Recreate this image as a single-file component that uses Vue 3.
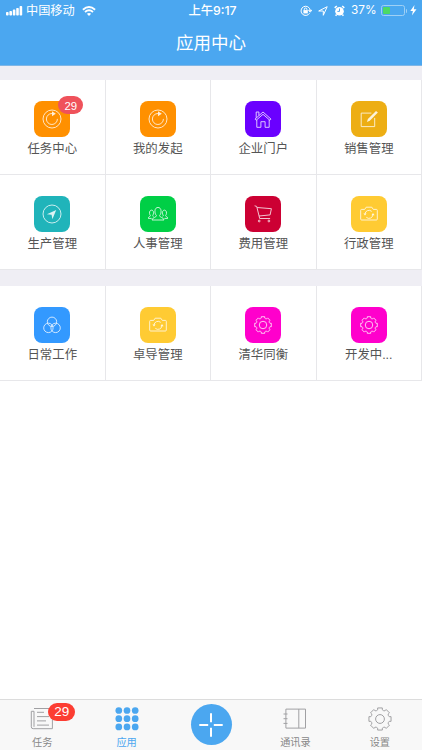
<template>
  <div class="page">
    <header class="header">
      <div class="status-bar">
        <div class="status-left">
          <svg class="signal" width="17" height="10" viewBox="0 0 17 10">
            <rect x="0" y="6" width="2.6" height="3.6" rx=".8" />
            <rect x="3.4" y="4.9" width="2.6" height="4.7" rx=".8" />
            <rect x="6.8" y="3.6" width="2.6" height="6" rx=".8" />
            <rect x="10.2" y="2" width="2.6" height="7.6" rx=".8" />
            <rect x="13.6" y="0" width="2.6" height="9.6" rx=".8" />
          </svg>
          <span class="carrier">中国移动</span>
          <svg class="wifi" width="14" height="10" viewBox="0 0 14 10">
            <path d="M.9 3.7Q7-1.7 13.1 3.7" />
            <path d="M3 6Q7 2.6 11 6" />
            <path class="dot" d="M4.9 7.7Q7 6.1 9.1 7.7L7 10z" />
          </svg>
        </div>
        <div class="status-time">上午9:17</div>
        <div class="status-right">
          <svg width="12" height="12" viewBox="0 0 12 12">
            <path class="line" d="M9.6 8.2A4.6 4.6 0 1 1 10.2 5.2M8.6 5.3h3.1L10.2 7.2z" />
            <rect x="3.4" y="5.1" width="4.4" height="3.3" />
            <path class="line" d="M4.3 5.4V4.3a1.3 1.3 0 0 1 2.6 0v1.1" />
          </svg>
          <svg width="10" height="10" viewBox="0 0 10 10">
            <path class="line" d="M.7 5L9.2.7 5.3 9.3V5z" />
          </svg>
          <svg class="alarm" width="11" height="12" viewBox="0 0 11 12">
            <circle cx="5.5" cy="6.2" r="4.3" />
            <path class="line thick" d="M.7 2.9L2.8 1M8.2 1l2.1 1.9M2.6 9.6l-1 1.2M8.4 9.6l1 1.2" />
            <path class="hand" d="M5.5 3.5v2.9H3.4" />
          </svg>
          <span class="percent">37%</span>
          <span class="battery"><span class="battery-level" :style="{ width: batteryLevel + '%' }"></span></span>
          <span class="battery-cap"></span>
          <svg class="bolt" width="7" height="11" viewBox="0 0 7 11">
            <path d="M4.5 0L.3 6h2.6L1.9 10.5 6.5 4.2H3.8z" />
          </svg>
        </div>
      </div>
      <h1 class="title">应用中心</h1>
    </header>

    <main class="content">
      <section v-for="(group, g) in groups" :key="g" class="app-grid">
        <div v-for="app in group" :key="app.name" class="app-cell">
          <div class="app-icon" :class="app.color">
            <svg v-if="app.icon === 'refresh'" viewBox="0 0 20 20">
              <circle cx="10" cy="10" r="9" />
              <path d="M15.4 9.9A5.5 5.5 0 1 1 10 4.5h1" />
              <path class="solid" d="M10 2.2L13.8 4.8 10 7.2z" />
            </svg>
            <svg v-else-if="app.icon === 'home'" viewBox="0 0 20 20">
              <path d="M2 10.1L10 3l8 7.1-1.1 1.2L10 5.3l-6.9 6z" />
              <path d="M3.8 10.7v7.6h4.1v-5.6h4.2v5.6h4.1v-7.6M3.2 8.8V3h2.7v3.4" />
            </svg>
            <svg v-else-if="app.icon === 'edit'" viewBox="0 0 20 20">
              <path d="M12.4 4.1H2.2v13.5h13.5V8.9" />
              <path class="solid" d="M7.9 13l1-2.9 8.1-8 1.9 1.4-8.1 8.2z" />
            </svg>
            <svg v-else-if="app.icon === 'compass'" viewBox="0 0 20 20">
              <circle cx="10" cy="10" r="9" />
              <path class="solid" d="M4.9 10.2L14.2 6l-3.8 9.2-.8-4.4z" />
            </svg>
            <svg v-else-if="app.icon === 'people'" viewBox="0 0 20 20">
              <path d="M8.4 11.5C6.9 9.8 6.9 8.4 7 6.6c.1-4.2 5.9-4.2 6 0 .1 1.8.1 3.2-1.4 4.9 0 2.4 4.1 1.5 4.4 4.5H4c.3-3 4.4-2.1 4.4-4.5z" />
              <path d="M5.4 12.6c-.7-.3-.7-.8-.6-1.2 3-5.6-3.6-7.4-3.3-2.1.1 1 .4 1.6.9 2.2 0 1.4-2.2 1-2.2 2.9h3.4M14.6 12.6c.7-.3.7-.8.6-1.2-3-5.6 3.6-7.4 3.3-2.1-.1 1-.4 1.6-.9 2.2 0 1.4 2.2 1 2.2 2.9h-3.4" />
            </svg>
            <svg v-else-if="app.icon === 'cart'" viewBox="0 0 20 20">
              <path d="M1.6 1.8l2.1.6 3 12.1h10.4M4.2 3.5l14.2 1.2-1.3 6.2L6 12" />
              <circle cx="6.2" cy="17" r=".9" />
              <circle cx="15.9" cy="17" r=".9" />
            </svg>
            <svg v-else-if="app.icon === 'camera'" viewBox="0 0 20 20">
              <path d="M2.6 5.4h3.1l1.5-2.2h5.6l1.5 2.2h3.1q.9 0 .9.9v8.8q0 .9-.9.9H2.6q-.9 0-.9-.9V6.3q0-.9.9-.9z" />
              <path d="M6 10a4 4 0 0 1 6.7-2.6M14 10.7a4 4 0 0 1-6.7 2.6" />
              <path class="solid" d="M4.4 9.4h3.2L6 11.6zM12.4 11.3h3.2L14 9.1z" />
            </svg>
            <svg v-else-if="app.icon === 'rings'" viewBox="0 0 20 20">
              <circle cx="10" cy="6.8" r="4.7" />
              <circle cx="6.4" cy="12.9" r="4.7" />
              <circle cx="13.6" cy="12.9" r="4.7" />
            </svg>
            <svg v-else class="gear" viewBox="0 0 24 24">
              <path :d="gearPath" />
              <circle cx="12" cy="12" r="5" />
            </svg>
            <span v-if="app.badge" class="app-badge">{{ app.badge }}</span>
          </div>
          <span class="app-name">{{ app.name }}</span>
        </div>
      </section>
    </main>

    <nav class="tab-bar">
      <div class="tab">
        <div class="tab-icon">
          <svg width="24" height="24" viewBox="0 0 24 24">
            <path d="M4 1.5h18.4v20.2H3.2q-1.9 0-1.9-1.9V4.3H4v15.5M7 5.3h7M7 9.6h12M7 13.9h9M7 18.1h12" />
          </svg>
          <span class="tab-badge">29</span>
        </div>
        <span>任务</span>
      </div>
      <div class="tab active">
        <div class="tab-icon">
          <svg width="24" height="24" viewBox="0 0 24 24">
            <template v-for="row in 3" :key="row">
              <circle v-for="col in 3" :key="col" class="grid-dot" :cx="col * 8.2 - 4.4" :cy="row * 8.2 - 4.7" r="3.35" />
            </template>
          </svg>
        </div>
        <span>应用</span>
      </div>
      <div class="tab">
        <div class="add-button">
          <svg width="28" height="28" viewBox="0 0 28 28">
            <path d="M14 2.3v8.9M14 16.8v8.9M2.3 14h8.9M16.8 14h8.9" />
          </svg>
        </div>
      </div>
      <div class="tab">
        <div class="tab-icon">
          <svg width="24" height="24" viewBox="0 0 24 24">
            <path d="M2.9 2.1h19.6v19H2.9zM15.8 2.1v19M.5 7h4M.5 11.7h4M.5 16.4h4" />
          </svg>
        </div>
        <span>通讯录</span>
      </div>
      <div class="tab">
        <div class="tab-icon">
          <svg width="24" height="24" viewBox="0 0 24 24">
            <path :d="gearPath" />
            <circle cx="12" cy="12" r="4.4" />
          </svg>
        </div>
        <span>设置</span>
      </div>
    </nav>
  </div>
</template>

<script setup>
const batteryLevel = 37

const groups = [
  [
    { name: '任务中心', icon: 'refresh', color: 'orange', badge: 29 },
    { name: '我的发起', icon: 'refresh', color: 'orange' },
    { name: '企业门户', icon: 'home', color: 'purple' },
    { name: '销售管理', icon: 'edit', color: 'amber' },
    { name: '生产管理', icon: 'compass', color: 'teal' },
    { name: '人事管理', icon: 'people', color: 'green' },
    { name: '费用管理', icon: 'cart', color: 'red' },
    { name: '行政管理', icon: 'camera', color: 'yellow' }
  ],
  [
    { name: '日常工作', icon: 'rings', color: 'blue' },
    { name: '卓导管理', icon: 'camera', color: 'yellow' },
    { name: '清华同衡', icon: 'gear', color: 'pink' },
    { name: '开发中...', icon: 'gear', color: 'pink' }
  ]
]

// Eight teeth around a 24x24 box, the gaps are rounded inwards
const point = (radius, degrees) => {
  const angle = (degrees * Math.PI) / 180
  return `${(12 + radius * Math.cos(angle)).toFixed(2)} ${(12 + radius * Math.sin(angle)).toFixed(2)}`
}

const gearPath =
  Array.from({ length: 8 }, (_, i) => {
    const a = i * 45
    return `${i ? 'L' : 'M'}${point(9.5, a - 14)}L${point(11.3, a - 12)}L${point(11.3, a + 12)}L${point(9.5, a + 14)}Q${point(8.7, a + 22.5)} ${point(9.5, a + 31)}`
  }).join('') + 'Z'
</script>

<style>
body {
  margin: 0;
  background: #fff;
}
</style>

<style scoped>
.page {
  height: 750px;
  display: flex;
  flex-direction: column;
  overflow: hidden;
  background: #fff;
  font-family: 'Liberation Sans', 'Noto Sans CJK SC', sans-serif;
}

.header {
  height: 66px;
  flex: none;
  box-sizing: border-box;
  background: #4ba7f0;
  border-bottom: 1px solid #7fb6e6;
  color: #fff;
}

.status-bar {
  height: 21px;
  display: grid;
  grid-template-columns: 1fr auto 1fr;
  align-items: center;
  padding: 0 5px 0 6px;
  font-family: Inter, 'Noto Sans CJK SC', sans-serif;
  font-size: 12px;
  line-height: 21px;
}

.status-bar svg {
  fill: #fff;
}

.status-left,
.status-right {
  display: flex;
  align-items: center;
}

.carrier {
  margin: 0 7px 0 3px;
  font-size: 12.2px;
}

.wifi path {
  fill: none;
  stroke: #fff;
  stroke-width: 1.9;
}

.wifi .dot {
  fill: #fff;
  stroke: none;
}

.status-time {
  padding-left: 2px;
  font-size: 12.3px;
  font-weight: 500;
}

.status-right {
  justify-content: flex-end;
}

.status-right svg {
  margin-right: 6px;
}

.status-bar .line {
  fill: none;
  stroke: #fff;
  stroke-width: 1;
}

.status-bar .thick {
  stroke-width: 1.5;
}

.alarm .hand {
  fill: none;
  stroke: #4ba7f0;
}

.status-right .percent {
  margin-right: 4px;
  font-size: 11.8px;
}

.battery {
  width: 24px;
  height: 11px;
  box-sizing: border-box;
  padding: 1px;
  border: 1px solid #9fd0f5;
  border-radius: 2.5px;
}

.battery-level {
  display: block;
  height: 7px;
  border-radius: 1px;
  background: #4cd964;
}

.battery-cap {
  width: 1.5px;
  height: 4px;
  margin: 0 3px 0 1px;
  border-radius: 0 2px 2px 0;
  background: #9fd0f5;
}

.status-right .bolt {
  margin-right: 0;
}

.title {
  margin: 0;
  font-size: 17.5px;
  font-weight: 400;
  line-height: 45px;
  text-align: center;
}

.content {
  flex: 1;
}

.app-grid {
  display: grid;
  grid-template-columns: repeat(4, 1fr);
  grid-auto-rows: 95px;
  border-top: 14px solid #efeef4;
}

.app-grid + .app-grid {
  border-top-width: 16px;
}

.app-cell {
  display: flex;
  flex-direction: column;
  align-items: center;
  padding-top: 21px;
  border-right: 1px solid #e7e7ea;
  border-bottom: 1px solid #e7e7ea;
}

.app-icon {
  position: relative;
  width: 36px;
  height: 36px;
  flex: none;
  display: flex;
  align-items: center;
  justify-content: center;
  border-radius: 8px;
}

.app-icon svg {
  width: 20px;
  height: 20px;
  fill: none;
  stroke: #fff;
  stroke-width: 0.9;
  opacity: 0.85;
}

.app-icon .gear {
  width: 18px;
  height: 18px;
  stroke-width: 1.2;
}

.app-icon .solid {
  fill: #fff;
  stroke: none;
}

.orange {
  background: #ff9000;
}

.purple {
  background: #6a00ff;
}

.amber {
  background: #edae14;
}

.teal {
  background: #20b4ba;
}

.green {
  background: #00cf46;
}

.red {
  background: #cc0033;
}

.yellow {
  background: #ffcb33;
}

.blue {
  background: #3399ff;
}

.pink {
  background: #ff00cc;
}

.app-badge {
  position: absolute;
  top: -5px;
  right: -13px;
  width: 25px;
  height: 18px;
  border-radius: 9px;
  background: #ef525b;
  color: #fff;
  font-size: 11.4px;
  line-height: 20px;
  text-align: center;
}

.app-name {
  margin-top: 3px;
  color: #555;
  font-size: 12.4px;
  line-height: 18px;
}

.tab-bar {
  height: 51px;
  flex: none;
  box-sizing: border-box;
  display: flex;
  border-top: 1px solid #dcdcdc;
  background: #f8f8f8;
}

.tab {
  flex: 1;
  display: flex;
  flex-direction: column;
  align-items: center;
  padding-top: 7px;
  color: #888;
  font-size: 10.2px;
  line-height: 14px;
}

.tab-icon {
  position: relative;
  height: 24px;
  margin-bottom: 5px;
}

.tab-icon svg {
  display: block;
  fill: none;
  stroke: #a0a0a3;
  stroke-width: 1;
}

.tab.active {
  color: #4ba7f0;
}

.tab-icon .grid-dot {
  fill: #4ba7f0;
  stroke: none;
}

.tab-badge {
  position: absolute;
  top: -4px;
  left: 18px;
  width: 27px;
  height: 18px;
  border-radius: 9px;
  background: #fc3d32;
  color: #fff;
  font-size: 13.5px;
  line-height: 18px;
  text-align: center;
}

.add-button {
  width: 41px;
  height: 41px;
  display: flex;
  align-items: center;
  justify-content: center;
  margin-top: -3px;
  border-radius: 50%;
  background: #4ba7f0;
}

.add-button svg {
  fill: none;
  stroke: #fff;
  stroke-width: 2;
}
</style>
